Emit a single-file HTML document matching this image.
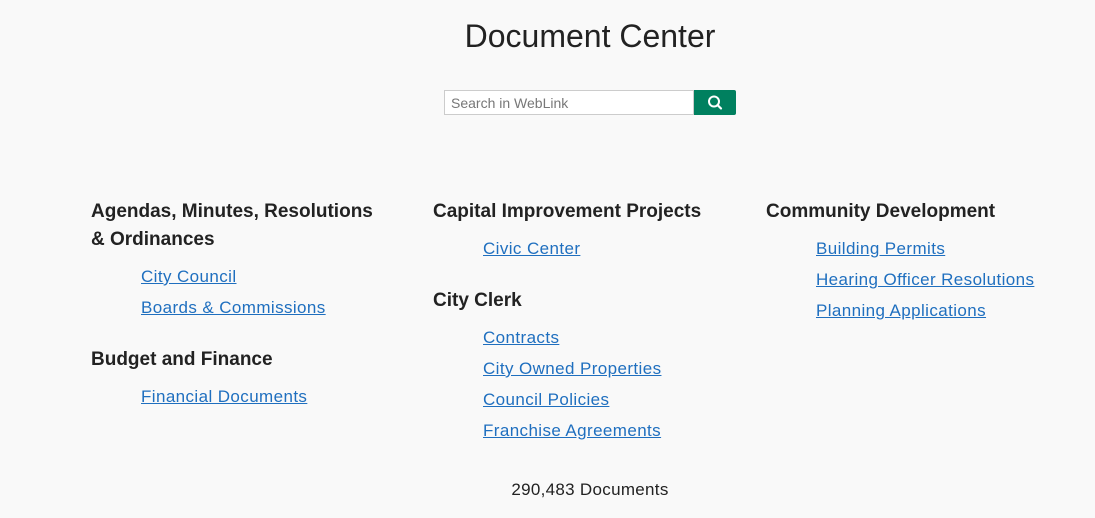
<html><head><style>
body{margin:0;background:#f9f9f9;font-family:"Liberation Sans",sans-serif;color:#222;width:1095px;height:518px;position:relative;overflow:hidden}
.a{position:absolute;white-space:nowrap;line-height:28px}
h2{margin:0;font-size:19px;font-weight:bold;color:#222;letter-spacing:0}
a{color:#1f6fbf;text-decoration:underline;font-size:17px;letter-spacing:0.4px}
</style></head><body>
<div class="a" style="left:0;width:1180px;text-align:center;top:18px;font-size:32px;line-height:36px;color:#222">Document Center</div>
<div class="a" style="left:444px;top:90px;width:248px;height:23px;border:1px solid #ccc;background:#fff;line-height:24px;font-size:14px;color:#777;text-indent:6px">Search in WebLink</div>
<div class="a" style="left:694px;top:90px;width:42px;height:25px;background:#00805f;border-radius:0 2px 2px 0">
<svg width="42" height="25"><circle cx="20" cy="11.5" r="5" fill="none" stroke="#fff" stroke-width="2"/><line x1="23.5" y1="15" x2="27" y2="18.5" stroke="#fff" stroke-width="2.2" stroke-linecap="round"/></svg></div>

<h2 class="a" style="left:91px;top:198px">Agendas, Minutes, Resolutions</h2>
<h2 class="a" style="left:91px;top:226px">&amp; Ordinances</h2>
<a class="a" style="left:141px;top:263px">City Council</a>
<a class="a" style="left:141px;top:294px">Boards &amp; Commissions</a>
<h2 class="a" style="left:91px;top:346px">Budget and Finance</h2>
<a class="a" style="left:141px;top:383px">Financial Documents</a>

<h2 class="a" style="left:433px;top:198px">Capital Improvement Projects</h2>
<a class="a" style="left:483px;top:235px">Civic Center</a>
<h2 class="a" style="left:433px;top:287px">City Clerk</h2>
<a class="a" style="left:483px;top:324px">Contracts</a>
<a class="a" style="left:483px;top:355px">City Owned Properties</a>
<a class="a" style="left:483px;top:386px">Council Policies</a>
<a class="a" style="left:483px;top:417px">Franchise Agreements</a>

<h2 class="a" style="left:766px;top:198px">Community Development</h2>
<a class="a" style="left:816px;top:235px">Building Permits</a>
<a class="a" style="left:816px;top:266px">Hearing Officer Resolutions</a>
<a class="a" style="left:816px;top:297px">Planning Applications</a>

<div class="a" style="left:0;width:1180px;text-align:center;top:476px;font-size:17px;letter-spacing:0.3px;color:#222">290,483 Documents</div>
</body></html>
